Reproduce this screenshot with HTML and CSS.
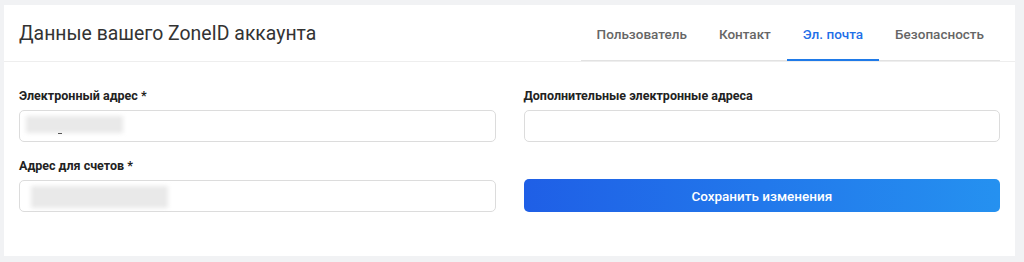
FILE: index.html
```html
<!DOCTYPE html>
<html lang="ru">
<head>
  <meta charset="UTF-8">
  <meta name="viewport" content="width=device-width, initial-scale=1.0">
  <title>Данные вашего ZoneID аккаунта</title>
  <link rel="stylesheet" href="styles.css">
</head>
<body>
  <div class="card">
    <div class="card-header">
      <h1 class="title">Данные вашего ZoneID аккаунта</h1>
      <nav class="tabs">
        <a class="tab" href="#">Пользователь</a>
        <a class="tab" href="#">Контакт</a>
        <a class="tab active" href="#">Эл. почта</a>
        <a class="tab" href="#">Безопасность</a>
      </nav>
    </div>

    <form class="form">
      <div class="field">
        <label class="label">Электронный адрес *</label>
        <div class="input">
          <span class="blur blur-short"></span>
          <span class="caret"></span>
        </div>
      </div>
      <div class="field">
        <label class="label">Дополнительные электронные адреса</label>
        <div class="input"></div>
      </div>
      <div class="field">
        <label class="label">Адрес для счетов *</label>
        <div class="input">
          <span class="blur blur-long"></span>
        </div>
      </div>
      <div class="field field-end">
        <button class="btn" type="button">Сохранить изменения</button>
      </div>
    </form>
  </div>
</body>
</html>
```

FILE: styles.css
```css
body {
  margin: 0;
  padding: 5px 9px 0 4px;
  background-color: #f1f2f4;
  font-family: Roboto, "Liberation Sans", Arial, sans-serif;
  color: #222;
}

.card {
  background: #fff;
  height: 251px;
}

/* шапка с заголовком и вкладками */
.card-header {
  display: flex;
  justify-content: space-between;
  height: 56px;
  padding: 0 15px;
  border-bottom: 1px solid #eeeeee;
}

.title {
  margin: 0;
  align-self: center;
  padding-top: 1px;
  font-size: 19.4px;
  font-weight: 400;
  color: #333;
}

.tabs {
  display: flex;
  align-items: stretch;
  box-shadow: inset 0 -1px 0 #e2e2e2;
}

.tab {
  display: flex;
  align-items: center;
  padding: 4px 16px 0;
  font-size: 13.5px;
  font-weight: 500;
  color: #666;
  text-decoration: none;
  border-bottom: 2px solid transparent;
}

.tab.active {
  color: #1f6fe8;
  border-bottom-color: #1f7ae8;
}

/* форма */
.form {
  display: grid;
  grid-template-columns: 1fr 1fr;
  column-gap: 28px;
  row-gap: 16px;
  padding: 26px 15px 0;
}

.field {
  display: flex;
  flex-direction: column;
}

.field-end {
  justify-content: flex-end;
}

.label {
  font-size: 12.5px;
  font-weight: 700;
  line-height: 16px;
  color: #222;
  margin-bottom: 6px;
}

.input {
  position: relative;
  height: 32px;
  box-sizing: border-box;
  border: 1px solid #dcdcdc;
  border-radius: 5px;
  background: #fff;
}

.blur {
  position: absolute;
  background: #e9e9e9;
  filter: blur(2px);
}

.blur-short {
  left: 6px;
  top: 5px;
  width: 97px;
  height: 17px;
}

.blur-long {
  left: 11px;
  top: 5px;
  width: 137px;
  height: 22px;
}

.caret {
  position: absolute;
  left: 38px;
  top: 22px;
  width: 4px;
  height: 1px;
  background: #555;
}

.btn {
  height: 33px;
  border: 0;
  border-radius: 5px;
  background: linear-gradient(90deg, #1f5fe6 0%, #2591f0 100%);
  color: #fff;
  font-family: inherit;
  font-size: 13.5px;
  font-weight: 500;
  cursor: pointer;
}
```
